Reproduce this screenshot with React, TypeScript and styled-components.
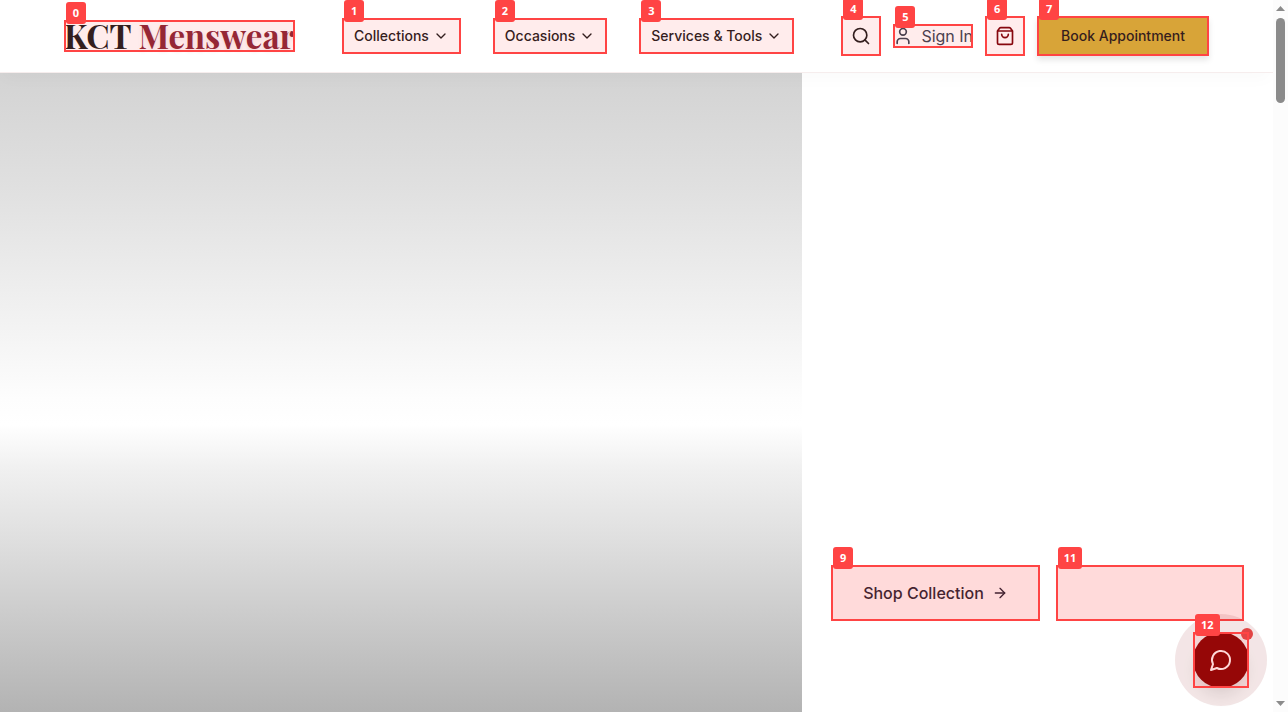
import React from "react";
import styled, { createGlobalStyle, css } from "styled-components";
import {
  ArrowRight,
  ChevronDown,
  Search,
  ShoppingBag,
  User,
} from "lucide-react";

const GlobalStyle = createGlobalStyle`
  *, *::before, *::after { box-sizing: border-box; }
  body {
    margin: 0;
    background: #ffffff;
    font-family: Inter, "Liberation Sans", sans-serif;
    color: #1c1a1a;
  }
  button { font-family: inherit; color: inherit; cursor: pointer; }
`;

const Page = styled.div`
  display: flex;
  min-height: 100vh;
`;

const Main = styled.div`
  flex: 1;
  min-width: 0;
  display: flex;
  flex-direction: column;
`;

/* Numbered outline drawn round every interactive element */
const MarkBox = styled.span`
  position: relative;
  display: inline-flex;
`;

const MarkFrame = styled.span<{ $strong?: boolean }>`
  position: absolute;
  inset: 0;
  border: 2px solid #ff4444;
  background: ${(p) => (p.$strong ? "rgba(255, 68, 68, 0.2)" : "rgba(255, 68, 68, 0.1)")};
  pointer-events: none;
`;

const MarkLabel = styled.span`
  position: absolute;
  top: -18px;
  left: 2px;
  min-width: 20px;
  height: 22px;
  padding: 0 6px;
  border-radius: 3px;
  background: #ff4444;
  color: #ffffff;
  font: bold 11px/22px "Open Sans", "Noto Sans", sans-serif;
  text-align: center;
  pointer-events: none;
`;

type MarkedProps = { n: number; strong?: boolean; children: React.ReactNode };

function Marked({ n, strong, children }: MarkedProps) {
  return (
    <MarkBox>
      {children}
      <MarkFrame $strong={strong} />
      <MarkLabel>{n}</MarkLabel>
    </MarkBox>
  );
}

const Header = styled.header`
  position: relative;
  z-index: 2;
  display: flex;
  align-items: center;
  justify-content: space-between;
  height: 73px;
  padding: 0 64px;
  background: #ffffff;
  border-bottom: 1px solid #f6eded;
  box-shadow: 0 10px 15px -3px rgba(0, 0, 0, 0.02);
`;

const Logo = styled.a`
  display: block;
  height: 32px;
  font: bold 33px/30px "Playfair Display", "Liberation Serif", serif;
  color: #1c1a1a;
  text-decoration: none;
  white-space: nowrap;
`;

const LogoAccent = styled.span`
  color: #8a2434;
  text-shadow: 0 2px 4px rgba(139, 0, 0, 0.12);
`;

const Nav = styled.nav`
  display: flex;
  gap: 32px;
`;

const NavButton = styled.button`
  display: flex;
  align-items: center;
  gap: 4px;
  height: 36px;
  padding: 0 12px;
  border: 0;
  background: none;
  font-size: 14px;
  font-weight: 500;
  line-height: 20px;
  white-space: nowrap;
`;

const Actions = styled.div`
  display: flex;
  align-items: center;
  gap: 12px;
`;

const IconButton = styled.button<{ $accent?: boolean }>`
  display: grid;
  place-items: center;
  width: 40px;
  height: 40px;
  padding: 0;
  border: 0;
  background: none;
  ${(p) => p.$accent && css`color: #7a0008;`}
`;

const SignIn = styled.a`
  display: flex;
  align-items: center;
  gap: 8px;
  height: 24px;
  font-size: 16px;
  line-height: 24px;
  color: #374151;
  text-decoration: none;
  white-space: nowrap;
`;

const BookButton = styled.button`
  height: 40px;
  padding: 0 24px;
  border: 0;
  background: #d4af37;
  box-shadow: 0 4px 6px rgba(0, 0, 0, 0.1);
  font-size: 14px;
  font-weight: 500;
  line-height: 20px;
  white-space: nowrap;
`;

const Hero = styled.main`
  flex: 1;
  display: grid;
  grid-template-columns: 63fr 37fr;
`;

const HeroMedia = styled.section`
  background: linear-gradient(
    180deg,
    #d3d3d3 0%,
    #e0e0e0 18%,
    #f4f4f4 41%,
    #fdfdfd 51%,
    #ffffff 55%,
    #f0f0f0 62%,
    #dfdfdf 73%,
    #b3b3b3 100%
  );
`;

const HeroPanel = styled.section`
  display: flex;
  align-items: flex-end;
  justify-content: center;
  gap: 16px;
  padding: 0 24px 91px;
`;

const HeroButton = styled.button<{ $empty?: boolean }>`
  display: flex;
  align-items: center;
  gap: 8px;
  height: 56px;
  padding: 0 32px;
  border: 0;
  background: none;
  color: #141a2c;
  font-size: 16px;
  font-weight: 500;
  line-height: 24px;
  white-space: nowrap;
  ${(p) => p.$empty && css`width: 188px;`}
`;

const ChatDock = styled.div`
  position: fixed;
  right: 39px;
  bottom: 24px;
  z-index: 3;
  display: flex;
  border-radius: 50%;

  &::before {
    content: "";
    position: absolute;
    inset: -18px;
    border-radius: 50%;
    background: rgba(139, 0, 10, 0.1);
  }
`;

const ChatButton = styled.button`
  display: grid;
  place-items: center;
  width: 56px;
  height: 56px;
  padding: 0;
  border: 0;
  border-radius: 50%;
  background: #8b0000;
  color: #ffffff;
  box-shadow: 0 10px 15px -3px rgba(0, 0, 0, 0.1);
`;

const ChatDot = styled.span`
  position: absolute;
  top: -4px;
  right: -4px;
  width: 12px;
  height: 12px;
  border-radius: 50%;
  background: #e24444;
`;

const Rail = styled.div`
  position: sticky;
  top: 0;
  z-index: 2;
  display: flex;
  flex-direction: column;
  align-items: center;
  justify-content: space-between;
  width: 15px;
  height: 100vh;
  padding: 6px 0;
  background: #fcfcfc;
`;

const RailTop = styled.div`
  display: flex;
  flex-direction: column;
  align-items: center;
  gap: 7px;
`;

const RailThumb = styled.div`
  width: 9px;
  height: 85px;
  border-radius: 5px;
  background: #8b8b8b;
`;

function ChatIcon() {
  return (
    <svg
      width="24"
      height="24"
      viewBox="0 0 24 24"
      fill="none"
      stroke="#ffe9e9"
      strokeWidth="2"
      strokeLinecap="round"
      strokeLinejoin="round"
    >
      <path d="M7.900 20A9 9 0 1 0 4 16.100L2 22Z" />
    </svg>
  );
}

const navItems = ["Collections", "Occasions", "Services & Tools"];

export default function App() {
  return (
    <Page>
      <GlobalStyle />
      <Main>
        <Header>
          <Marked n={0}>
            <Logo href="#">
              KCT <LogoAccent>Menswear</LogoAccent>
            </Logo>
          </Marked>
          <Nav>
            {navItems.map((item, i) => (
              <Marked n={i + 1} key={item}>
                <NavButton>
                  {item}
                  <ChevronDown size={16} />
                </NavButton>
              </Marked>
            ))}
          </Nav>
          <Actions>
            <Marked n={4}>
              <IconButton aria-label="Search">
                <Search size={20} />
              </IconButton>
            </Marked>
            <Marked n={5}>
              <SignIn href="#">
                <User size={20} />
                Sign In
              </SignIn>
            </Marked>
            <Marked n={6}>
              <IconButton $accent aria-label="Cart">
                <ShoppingBag size={20} />
              </IconButton>
            </Marked>
            <Marked n={7}>
              <BookButton>Book Appointment</BookButton>
            </Marked>
          </Actions>
        </Header>
        <Hero>
          <HeroMedia />
          <HeroPanel>
            <Marked n={9} strong>
              <HeroButton>
                Shop Collection
                <ArrowRight size={16} />
              </HeroButton>
            </Marked>
            <Marked n={11} strong>
              <HeroButton $empty aria-label="More" />
            </Marked>
          </HeroPanel>
        </Hero>
      </Main>
      <Rail aria-hidden="true">
        <RailTop>
          <svg width="9" height="5" viewBox="0 0 9 5">
            <path d="M4.5 0 9 5H0z" fill="#8b8b8b" />
          </svg>
          <RailThumb />
        </RailTop>
        <svg width="9" height="5" viewBox="0 0 9 5">
          <path d="M0 0h9L4.5 5z" fill="#8b8b8b" />
        </svg>
      </Rail>
      <ChatDock>
        <Marked n={12}>
          <ChatButton aria-label="Open chat">
            <ChatIcon />
          </ChatButton>
          <ChatDot />
        </Marked>
      </ChatDock>
    </Page>
  );
}
